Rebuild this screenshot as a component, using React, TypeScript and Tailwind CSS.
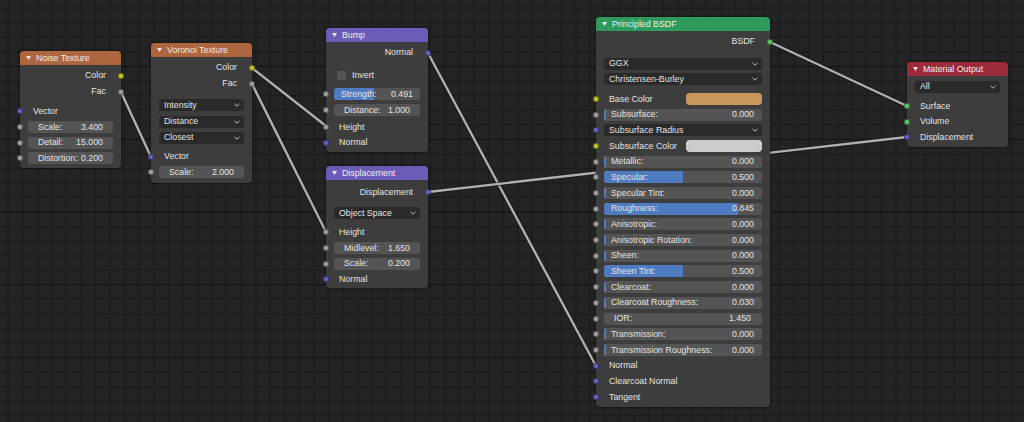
import React from 'react';

type Item =
  | { k: 'out'; label: string; c: string }
  | { k: 'in'; label: string; c: string }
  | { k: 'num'; label: string; value: string; c?: string; fill?: number; pad?: string }
  | { k: 'menu'; label: string; c?: string; tall?: boolean }
  | { k: 'color'; label: string; swatch: string; c: string }
  | { k: 'check'; label: string }
  | { k: 'gap'; h: string };

type NodeDef = {
  title: string;
  head: string;
  pos: string;
  items: Item[];
};

const Y = 'bg-[#c7c729]';
const G = 'bg-[#a1a1a1]';
const P = 'bg-[#6363c7]';
const N = 'bg-[#63c763]';

const nodes: NodeDef[] = [
  {
    title: 'Noise Texture',
    head: 'bg-[#ad663d]',
    pos: 'left-[20px] top-[51px] w-[101px]',
    items: [
      { k: 'gap', h: 'h-[3px]' },
      { k: 'out', label: 'Color', c: Y },
      { k: 'out', label: 'Fac', c: G },
      { k: 'gap', h: 'h-[4px]' },
      { k: 'in', label: 'Vector', c: P },
      { k: 'num', label: 'Scale:', value: '3.400', c: G, pad: 'px-[10px]' },
      { k: 'num', label: 'Detail:', value: '15.000', c: G, pad: 'px-[10px]' },
      { k: 'num', label: 'Distortion:', value: '0.200', c: G, pad: 'px-[10px]' },
      { k: 'gap', h: 'h-[2px]' },
    ],
  },
  {
    title: 'Voronoi Texture',
    head: 'bg-[#ad663d]',
    pos: 'left-[151px] top-[43px] w-[101px]',
    items: [
      { k: 'gap', h: 'h-[3px]' },
      { k: 'out', label: 'Color', c: Y },
      { k: 'out', label: 'Fac', c: G },
      { k: 'gap', h: 'h-[6px]' },
      { k: 'menu', label: 'Intensity', tall: true },
      { k: 'menu', label: 'Distance', tall: true },
      { k: 'menu', label: 'Closest', tall: true },
      { k: 'gap', h: 'h-[3px]' },
      { k: 'in', label: 'Vector', c: P },
      { k: 'num', label: 'Scale:', value: '2.000', c: G, pad: 'px-[10px]' },
      { k: 'gap', h: 'h-[3px]' },
    ],
  },
  {
    title: 'Bump',
    head: 'bg-[#6d5bb8]',
    pos: 'left-[326px] top-[28px] w-[102px]',
    items: [
      { k: 'gap', h: 'h-[3px]' },
      { k: 'out', label: 'Normal', c: P },
      { k: 'gap', h: 'h-[7px]' },
      { k: 'check', label: 'Invert' },
      { k: 'gap', h: 'h-[3px]' },
      { k: 'num', label: 'Strength:', value: '0.491', c: G, fill: 0.47, pad: 'px-[7px]' },
      { k: 'num', label: 'Distance:', value: '1.000', c: G, pad: 'px-[10px]' },
      { k: 'gap', h: 'h-[1.5px]' },
      { k: 'in', label: 'Height', c: G },
      { k: 'in', label: 'Normal', c: P },
      { k: 'gap', h: 'h-[1px]' },
    ],
  },
  {
    title: 'Displacement',
    head: 'bg-[#6d5bb8]',
    pos: 'left-[326px] top-[166px] w-[102px]',
    items: [
      { k: 'gap', h: 'h-[4.5px]' },
      { k: 'out', label: 'Displacement', c: P },
      { k: 'gap', h: 'h-[5px]' },
      { k: 'menu', label: 'Object Space' },
      { k: 'gap', h: 'h-[3.5px]' },
      { k: 'in', label: 'Height', c: G },
      { k: 'num', label: 'Midlevel:', value: '1.650', c: G, pad: 'px-[10px]' },
      { k: 'num', label: 'Scale:', value: '0.200', c: G, pad: 'px-[10px]' },
      { k: 'in', label: 'Normal', c: P },
      { k: 'gap', h: 'h-[1px]' },
    ],
  },
  {
    title: 'Principled BSDF',
    head: 'bg-[#2f9a5e]',
    pos: 'left-[596px] top-[17px] w-[174px]',
    items: [
      { k: 'gap', h: 'h-[3px]' },
      { k: 'out', label: 'BSDF', c: N },
      { k: 'gap', h: 'h-[6px]' },
      { k: 'menu', label: 'GGX' },
      { k: 'menu', label: 'Christensen-Burley' },
      { k: 'gap', h: 'h-[4px]' },
      { k: 'color', label: 'Base Color', swatch: 'bg-[#c8975c]', c: Y },
      { k: 'num', label: 'Subsurface:', value: '0.000', c: G, fill: 0, pad: 'pl-[7px] pr-[8px]' },
      { k: 'menu', label: 'Subsurface Radius', c: P },
      { k: 'color', label: 'Subsurface Color', swatch: 'bg-[#cccccc]', c: Y },
      { k: 'num', label: 'Metallic:', value: '0.000', c: G, fill: 0, pad: 'pl-[7px] pr-[8px]' },
      { k: 'num', label: 'Specular:', value: '0.500', c: G, fill: 0.5, pad: 'pl-[7px] pr-[8px]' },
      { k: 'num', label: 'Specular Tint:', value: '0.000', c: G, fill: 0, pad: 'pl-[7px] pr-[8px]' },
      { k: 'num', label: 'Roughness:', value: '0.845', c: G, fill: 0.845, pad: 'pl-[7px] pr-[8px]' },
      { k: 'num', label: 'Anisotropic:', value: '0.000', c: G, fill: 0, pad: 'pl-[7px] pr-[8px]' },
      { k: 'num', label: 'Anisotropic Rotation:', value: '0.000', c: G, fill: 0, pad: 'pl-[7px] pr-[8px]' },
      { k: 'num', label: 'Sheen:', value: '0.000', c: G, fill: 0, pad: 'pl-[7px] pr-[8px]' },
      { k: 'num', label: 'Sheen Tint:', value: '0.500', c: G, fill: 0.5, pad: 'pl-[7px] pr-[8px]' },
      { k: 'num', label: 'Clearcoat:', value: '0.000', c: G, fill: 0, pad: 'pl-[7px] pr-[8px]' },
      { k: 'num', label: 'Clearcoat Roughness:', value: '0.030', c: G, fill: 0, pad: 'pl-[7px] pr-[8px]' },
      { k: 'num', label: 'IOR:', value: '1.450', c: G, pad: 'pl-[10px] pr-[11px]' },
      { k: 'num', label: 'Transmission:', value: '0.000', c: G, fill: 0, pad: 'pl-[7px] pr-[8px]' },
      { k: 'num', label: 'Transmission Roughness:', value: '0.000', c: G, fill: 0, pad: 'pl-[7px] pr-[8px]' },
      { k: 'in', label: 'Normal', c: P },
      { k: 'in', label: 'Clearcoat Normal', c: P },
      { k: 'in', label: 'Tangent', c: P },
      { k: 'gap', h: 'h-[2.5px]' },
    ],
  },
  {
    title: 'Material Output',
    head: 'bg-[#9b2b39]',
    pos: 'left-[907px] top-[62px] w-[101px]',
    items: [
      { k: 'gap', h: 'h-[3px]' },
      { k: 'menu', label: 'All' },
      { k: 'gap', h: 'h-[3.5px]' },
      { k: 'in', label: 'Surface', c: N },
      { k: 'in', label: 'Volume', c: N },
      { k: 'in', label: 'Displacement', c: P },
      { k: 'gap', h: 'h-[1.5px]' },
    ],
  },
];

// socket centres, read off the nodes above
const wires: [number, number, number, number][] = [
  [121, 92, 151, 157],
  [252, 68, 326, 126],
  [252, 84, 326, 232],
  [428, 53, 596, 366],
  [428, 192, 907, 137],
  [770, 42, 907, 106],
];

function Socket({ c, side }: { c: string; side: 'l' | 'r' }) {
  return (
    <span
      className={`absolute top-1/2 -translate-y-1/2 w-[6px] h-[6px] rounded-full border border-black/40 ${c} ${
        side === 'l' ? 'left-[-3px]' : 'right-[-3px]'
      }`}
    />
  );
}

function Chevron() {
  return (
    <svg width="6" height="4" viewBox="0 0 6 4" className="shrink-0">
      <polyline points="0.5,0.8 3,3.2 5.5,0.8" fill="none" stroke="#bdbdbd" strokeWidth="1" />
    </svg>
  );
}

function Row({ it }: { it: Item }) {
  if (it.k === 'gap') return <div className={it.h} />;
  const base = 'relative h-[15.7px] flex items-center';
  switch (it.k) {
    case 'out':
      return (
        <div className={`${base} justify-end pr-[15px]`}>
          <span>{it.label}</span>
          <Socket c={it.c} side="r" />
        </div>
      );
    case 'in':
      return (
        <div className={`${base} pl-[13px]`}>
          <span>{it.label}</span>
          <Socket c={it.c} side="l" />
        </div>
      );
    case 'check':
      return (
        <div className={`${base} pl-[11px]`}>
          <span className="w-[9px] h-[9px] rounded-[1px] bg-[#545454] mr-[6px]" />
          <span>{it.label}</span>
        </div>
      );
    case 'menu':
      return (
        <div className={`relative flex items-center px-[8px] ${it.tall ? 'h-[16.2px]' : 'h-[15.7px]'}`}>
          <div className="flex-1 h-[12px] rounded-[3px] bg-[#2a2a2a] flex items-center justify-between pl-[5px] pr-[4px]">
            <span className="whitespace-nowrap">{it.label}</span>
            <Chevron />
          </div>
          {it.c && <Socket c={it.c} side="l" />}
        </div>
      );
    case 'color':
      return (
        <div className={`${base} pl-[13px] pr-[8px] justify-between`}>
          <span>{it.label}</span>
          <span className={`w-[76px] h-[12px] rounded-[4px] ${it.swatch}`} />
          <Socket c={it.c} side="l" />
        </div>
      );
    case 'num':
      return (
        <div className={`${base} px-[8px]`}>
          <div className="relative flex-1 h-[12px] rounded-[3px] bg-[#545454] overflow-hidden">
            {it.fill !== undefined && (
              <div
                className="absolute left-0 top-0 bottom-0 min-w-[2px] bg-[#4f7cc0]"
                style={{ width: `${it.fill * 100}%` }}
              />
            )}
            <div className={`relative h-full flex items-center justify-between whitespace-nowrap ${it.pad}`}>
              <span>{it.label}</span>
              <span>{it.value}</span>
            </div>
          </div>
          {it.c && <Socket c={it.c} side="l" />}
        </div>
      );
  }
}

function Node({ n }: { n: NodeDef }) {
  return (
    <div className={`absolute ${n.pos} rounded-[4px] bg-[#3d3d3d] shadow-[0_0_3px_rgba(0,0,0,0.7)]`}>
      <div className={`h-[14px] rounded-t-[4px] ${n.head} flex items-center pl-[6px] text-[#eeeeee]`}>
        <svg width="5" height="4" viewBox="0 0 5 4" className="mr-[5px] shrink-0">
          <polygon points="0,0 5,0 2.5,4" fill="#e8e8e8" />
        </svg>
        <span className="whitespace-nowrap">{n.title}</span>
      </div>
      <div className="flex flex-col">
        {n.items.map((it, i) => (
          <Row key={i} it={it} />
        ))}
      </div>
    </div>
  );
}

export default function App() {
  const step = 14.55;
  const xs = Array.from({ length: 72 }, (_, i) => 8.3 + i * step);
  const ys = Array.from({ length: 30 }, (_, i) => 8.3 + i * step);
  return (
    <div className="relative w-[1024px] h-[422px] overflow-hidden bg-[#242424] font-['Liberation_Sans',sans-serif] text-[8.8px] text-[#e4e4e4] leading-none">
      <svg className="absolute inset-0" width="1024" height="422">
        {xs.map((x, i) => (
          <line key={'x' + i} x1={x} y1={0} x2={x} y2={422} stroke="#1b1b1b" strokeWidth="1" />
        ))}
        {ys.map((y, i) => (
          <line
            key={'y' + i}
            x1={0}
            y1={y}
            x2={1024}
            y2={y}
            stroke={i % 5 === 4 ? '#171717' : '#1b1b1b'}
            strokeWidth={i % 5 === 4 ? 1.4 : 1}
          />
        ))}
        {wires.map(([x1, y1, x2, y2], i) => (
          <g key={i}>
            <line x1={x1} y1={y1} x2={x2} y2={y2} stroke="#161616" strokeWidth="4.2" strokeOpacity="0.6" />
            <line x1={x1} y1={y1} x2={x2} y2={y2} stroke="#b0b0b0" strokeWidth="2.4" />
          </g>
        ))}
      </svg>
      {nodes.map((n) => (
        <Node key={n.title} n={n} />
      ))}
    </div>
  );
}
